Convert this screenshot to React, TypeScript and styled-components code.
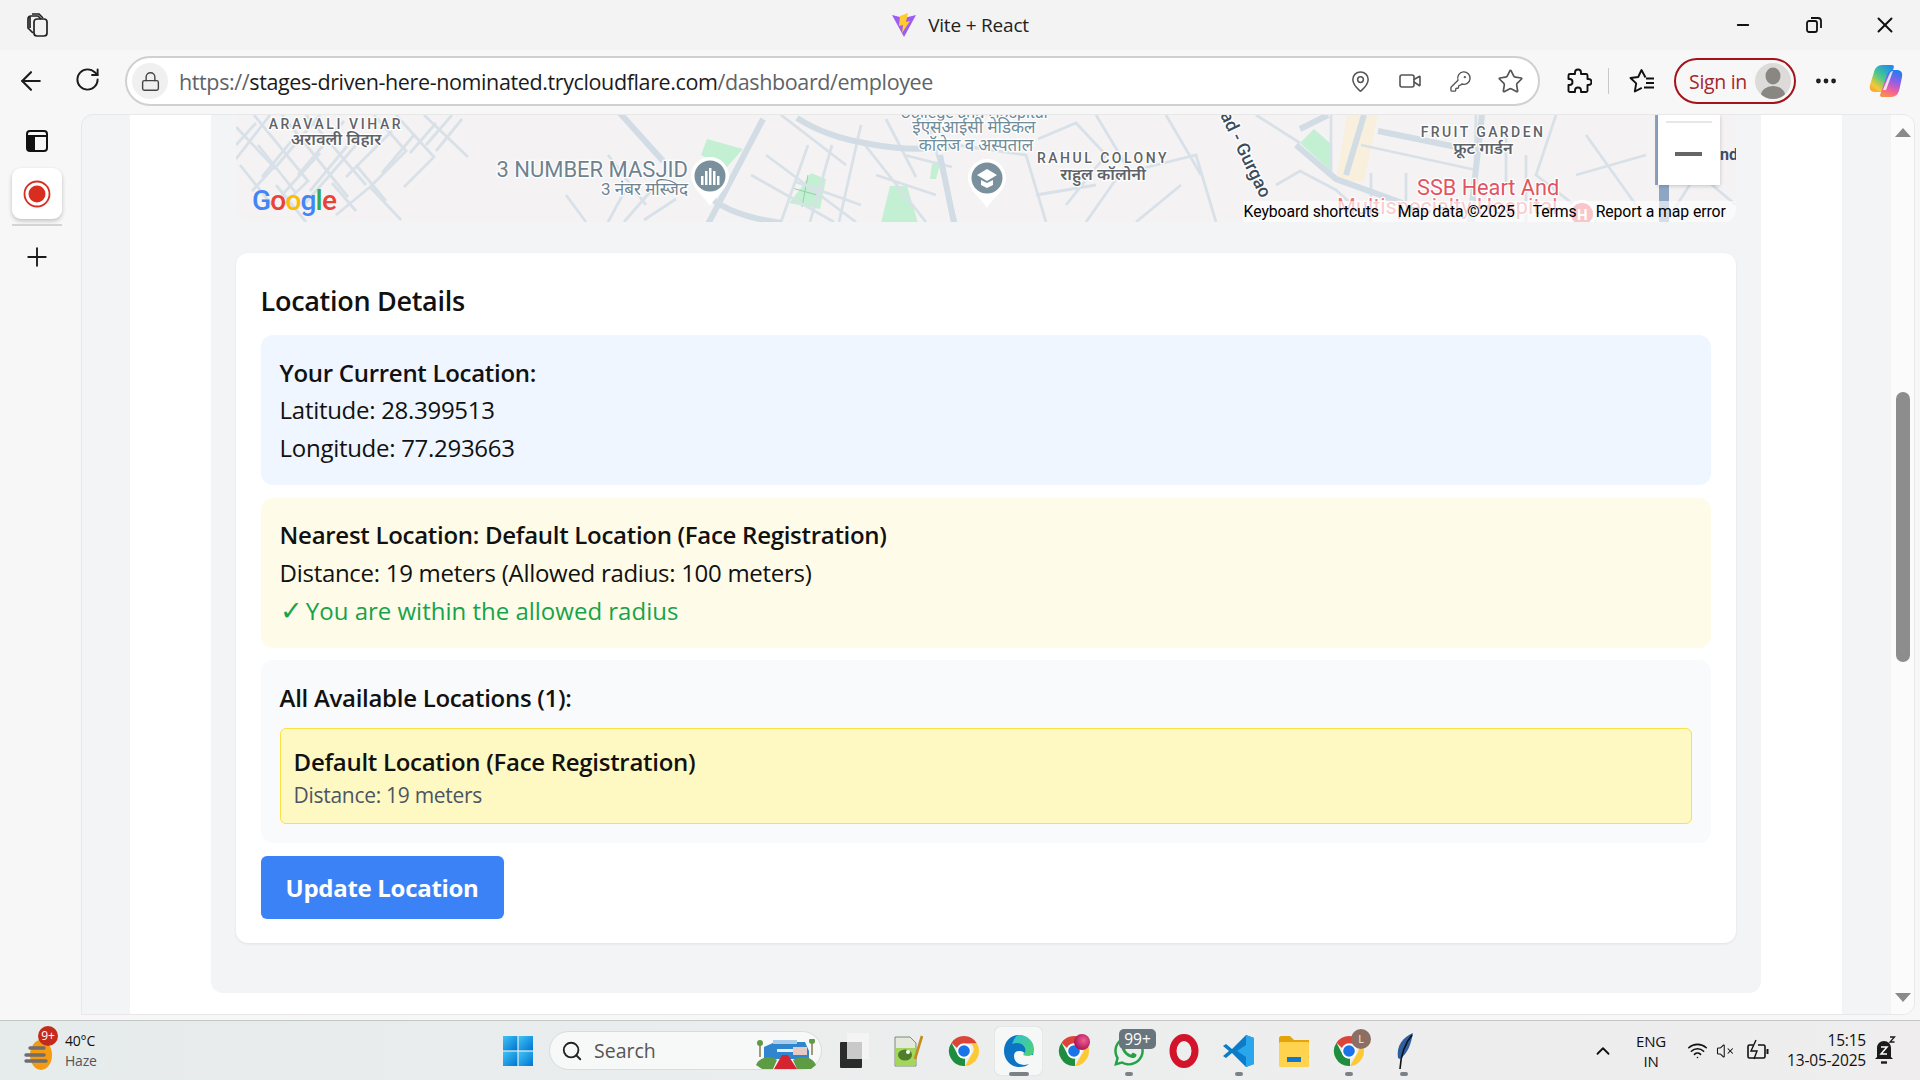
import React from 'react';
import styled, { createGlobalStyle } from 'styled-components';
import {
  ArrowLeft, RotateCw, Lock, MapPin, Video, KeyRound, Star, MoreHorizontal,
  Plus, Minus, X, Search, ChevronUp, Wifi, VolumeX,
} from 'lucide-react';
import { FaWhatsapp } from 'react-icons/fa';

const GlobalStyle = createGlobalStyle`
  html, body { margin: 0; padding: 0; height: 100%; overflow: hidden; }
  body { font-family: "Open Sans", "Noto Sans", "Liberation Sans", sans-serif; color: #111827; }
  * { box-sizing: border-box; }
`;

const Screen = styled.div`
  width: 1920px;
  height: 1080px;
  display: flex;
  flex-direction: column;
  background: #f7f7f7;
  overflow: hidden;
`;

/* ---------- title bar ---------- */
const TitleBar = styled.div`
  height: 50px;
  background: #f3f3f3;
  display: grid;
  grid-template-columns: 1fr auto 1fr;
  align-items: center;
`;
const TitleLeft = styled.div`
  padding: 4px 0 0 23px;
`;
const TabTitle = styled.div`
  display: flex;
  align-items: center;
  gap: 11px;
  font-size: 19px;
  letter-spacing: -0.2px;
  color: #222;
`;
const WindowButtons = styled.div`
  display: flex;
  justify-content: flex-end;
  align-items: center;
`;
const WindowButton = styled.div`
  width: 71px;
  height: 50px;
  display: flex;
  align-items: center;
  justify-content: center;
  color: #111;
`;

/* ---------- toolbar ---------- */
const Toolbar = styled.div`
  height: 64px;
  display: flex;
  align-items: center;
  padding: 0 0 2px 0;
`;
const NavButton = styled.div`
  width: 56px;
  display: flex;
  justify-content: center;
  color: #1c1c1c;
`;
const NavGroup = styled.div`
  display: flex;
  padding-left: 3px;
  margin-right: 10px;
`;
const AddressBar = styled.div`
  width: 1415px;
  height: 50px;
  border: 2px solid #d0d0d0;
  border-radius: 25px;
  background: #fff;
  display: flex;
  align-items: center;
  padding: 0 3px 0 5px;
`;
const LockBadge = styled.div`
  width: 36px;
  height: 36px;
  border-radius: 50%;
  background: #f0f0f0;
  display: flex;
  align-items: center;
  justify-content: center;
  color: #444;
  margin-right: 11px;
`;
const Url = styled.div`
  flex: 1;
  font-size: 21.5px;
  letter-spacing: -0.38px;
  color: #5f6368;
  white-space: nowrap;
`;
const UrlHost = styled.span`
  color: #1b1b1b;
`;
const AddressIcon = styled.div`
  width: 50px;
  display: flex;
  justify-content: center;
  color: #555;
`;
const ToolIcon = styled.div<{ $left?: number }>`
  display: flex;
  justify-content: center;
  color: #1b1b1b;
  width: 60px;
  margin-left: ${(p) => p.$left || 0}px;
`;
const ToolDivider = styled.div`
  width: 1px;
  height: 26px;
  background: #c9c9c9;
`;
const SignIn = styled.div`
  width: 122px;
  height: 46px;
  border: 2px solid #a4121a;
  border-radius: 23px;
  margin-left: 2px;
  display: flex;
  align-items: center;
  justify-content: space-between;
  padding: 0 3px 0 13px;
  font-size: 19.5px;
  letter-spacing: -0.3px;
  color: #a4262c;
`;
const Avatar = styled.div`
  width: 36px;
  height: 36px;
  border-radius: 50%;
  background: #dcdbd9;
  overflow: hidden;
`;
const CopilotSlot = styled.div`
  margin-left: 12px;
  display: flex;
`;

/* ---------- browser body ---------- */
const Body = styled.div`
  height: 901px;
  display: flex;
`;
const Sidebar = styled.div`
  width: 81px;
  display: flex;
  flex-direction: column;
  align-items: center;
  padding: 5px 8px 0 0;
`;
const SideIcon = styled.div<{ $after?: number }>`
  height: 44px;
  display: flex;
  align-items: center;
  justify-content: center;
  color: #1b1b1b;
  margin-bottom: ${(p) => p.$after || 0}px;
`;
const RecordTile = styled.div`
  width: 50px;
  height: 51px;
  border-radius: 9px;
  background: #fff;
  box-shadow: 0 2px 4px rgba(0, 0, 0, 0.22);
  display: flex;
  align-items: center;
  justify-content: center;
`;
const RecordUnderline = styled.div`
  width: 50px;
  height: 2px;
  background: #d4d4d4;
  margin: 5px 0 9px;
`;
const Page = styled.div`
  width: 1834px;
  border-radius: 12px 12px 12px 0;
  border: 1px solid #e8e8e8;
  background: #f3f4f6;
  display: flex;
  overflow: hidden;
`;
const PageGutter = styled.div`
  width: 48px;
`;
const WhiteColumn = styled.div`
  width: 1712px;
  background: #fff;
  padding: 0 81px;
`;
const Panel = styled.div`
  background: #f3f4f6;
  height: 878px;
  padding: 0 25px;
  border-radius: 0 0 12px 12px;
`;

/* ---------- map ---------- */
const MapBox = styled.div`
  position: relative;
  height: 107px;
  background: #f4f2f3;
  border-radius: 0 0 12px 12px;
  overflow: hidden;
  margin-bottom: 31px;
`;
const Attribution = styled.div`
  position: absolute;
  right: 0;
  bottom: 0;
  left: 1007px;
  height: 21px;
  background: rgba(255, 255, 255, 0.62);
  display: flex;
  align-items: center;
  padding-left: 1px;
  font-family: Roboto, sans-serif;
  font-size: 15.8px;
  letter-spacing: -0.1px;
  color: #000;
  white-space: nowrap;
`;
const AttributionItem = styled.span<{ $gap: number }>`
  margin-right: ${(p) => p.$gap}px;
`;
const ZoomControl = styled.div`
  position: absolute;
  top: 0;
  left: 1422px;
  width: 62px;
  height: 70px;
  background: #fff;
  box-shadow: 0 1px 4px rgba(0, 0, 0, 0.2);
`;
const ZoomSeparator = styled.div`
  height: 2px;
  margin: 6px 8px 0;
  background: #e6e6e6;
`;
const ZoomMinus = styled.div`
  width: 27px;
  height: 4px;
  margin: 29px auto 0;
  background: #666;
`;
const MapText = styled.text`
  font-family: Roboto, "Noto Sans", sans-serif;
  paint-order: stroke;
  stroke: #fff;
  stroke-width: 2.5px;
`;
const PlainMapText = styled.text`
  font-family: Roboto, sans-serif;
`;

/* ---------- location card ---------- */
const Card = styled.section`
  background: #fff;
  border-radius: 12px;
  box-shadow: 0 1px 3px rgba(0, 0, 0, 0.08);
  padding: 25px;
  height: 690px;
`;
const CardTitle = styled.h2`
  margin: 0 0 12px;
  font-size: 27px;
  line-height: 45px;
  font-weight: 600;
  letter-spacing: -0.3px;
  color: #111;
`;
const InfoBox = styled.div<{ $bg: string }>`
  background: ${(p) => p.$bg};
  border-radius: 12px;
  padding: 18.75px 19px;
  margin-bottom: 12.5px;
  font-size: 24px;
  line-height: 37.5px;
  letter-spacing: -0.29px;
  color: #111;
`;
const InfoHeading = styled.div`
  font-weight: 600;
`;
const GreenLine = styled.div`
  color: #16a34a;
  font-weight: 500;
  letter-spacing: 0;
  padding-top: 1px;
  margin-bottom: -1px;
`;
const CheckMark = styled.span`
  font-size: 27px;
  line-height: 0;
  margin-right: -3px;
`;
const LocationItem = styled.div`
  margin-top: 12px;
  height: 96px;
  background: #fef9c3;
  border: 1px solid #fde047;
  border-radius: 6px;
  padding: 14px 13px 0;
`;
const LocationName = styled.div`
  font-weight: 600;
  line-height: 37px;
`;
const LocationMeta = styled.div`
  font-size: 21px;
  line-height: 31px;
  color: #4b5563;
`;
const UpdateButton = styled.button`
  display: block;
  width: 243px;
  height: 63px;
  border: none;
  border-radius: 6px;
  background: #3b82f6;
  color: #fff;
  font-family: inherit;
  font-size: 24px;
  font-weight: 700;
  letter-spacing: -0.3px;
`;

/* ---------- scrollbar ---------- */
const ScrollTrack = styled.div`
  width: 24px;
  margin-left: 1px;
  background: #fbfbfb;
  border-left: 1px solid #f4f4f4;
  display: flex;
  flex-direction: column;
  align-items: center;
  padding: 13px 0 0 0;
`;
const ScrollArrow = styled.div<{ $down?: boolean }>`
  width: 0;
  height: 0;
  border-left: 8px solid transparent;
  border-right: 8px solid transparent;
  ${(p) => (p.$down ? 'border-top: 9px solid #8a8a8a;' : 'border-bottom: 9px solid #8a8a8a;')}
`;
const ScrollThumb = styled.div`
  width: 14px;
  height: 270px;
  border-radius: 7px;
  background: #8d8d8d;
  margin: 255px 0 331px;
`;

/* ---------- taskbar ---------- */
const Taskbar = styled.div`
  margin-top: 5px;
  height: 60px;
  border-top: 1px solid #c4c6c7;
  background: linear-gradient(90deg, #e6ebec 0%, #eceeee 50%, #efeded 100%);
  display: grid;
  grid-template-columns: 490px auto 1fr;
  align-items: center;
`;
const Weather = styled.div`
  display: flex;
  align-items: center;
  padding-left: 24px;
  gap: 7px;
`;
const WeatherIconWrap = styled.div`
  position: relative;
  width: 34px;
  height: 42px;
`;
const WeatherBadge = styled.div`
  position: absolute;
  top: -4px;
  left: 14px;
  min-width: 20px;
  height: 20px;
  border-radius: 10px;
  background: #c42b1c;
  color: #fff;
  font-size: 12px;
  line-height: 20px;
  text-align: center;
`;
const WeatherText = styled.div`
  font-size: 14px;
  line-height: 20px;
  letter-spacing: -0.2px;
  color: #111;
`;
const MutedLine = styled.div`
  color: #555;
`;
const TaskIcons = styled.div`
  display: flex;
  align-items: center;
`;
const TaskSlot = styled.div<{ $active?: boolean }>`
  position: relative;
  width: 55px;
  height: 48px;
  display: flex;
  align-items: center;
  justify-content: center;
  &::before {
    content: '';
    display: ${(p) => (p.$active ? 'block' : 'none')};
    position: absolute;
    inset: 0 4px;
    background: #f6f8f8;
    border-radius: 5px;
    box-shadow: 0 0 1px rgba(0, 0, 0, 0.25);
  }
  & > svg { position: relative; }
`;
const RunDot = styled.div<{ $wide?: boolean }>`
  position: absolute;
  bottom: -1px;
  left: 50%;
  transform: translateX(-50%);
  width: ${(p) => (p.$wide ? 20 : 8)}px;
  height: 4px;
  border-radius: 2px;
  background: #7b8287;
`;
const CountBadge = styled.div`
  position: absolute;
  top: 2px;
  right: 0;
  width: 37px;
  height: 20px;
  border-radius: 5px;
  background: #69757d;
  color: #fff;
  font-size: 15.5px;
  line-height: 20px;
  text-align: center;
`;
const ProfileBadge = styled.div`
  position: absolute;
  top: 2px;
  right: 5px;
  width: 20px;
  height: 20px;
  border-radius: 50%;
  background: #8d6e63;
  color: #eee;
  font-size: 11px;
  line-height: 20px;
  text-align: center;
`;
const PhotoBadge = styled.div`
  position: absolute;
  top: 7px;
  right: 11px;
  width: 16px;
  height: 16px;
  border-radius: 50%;
  background: radial-gradient(circle at 60% 40%, #f06292, #ad1457 70%, #5d2a3c);
`;
const SearchPill = styled.div`
  width: 273px;
  height: 39px;
  margin: 0 4px;
  border-radius: 20px;
  background: #f7f8f8;
  border: 1px solid #d9dcdd;
  display: flex;
  align-items: center;
  padding-left: 11px;
  gap: 11px;
  font-size: 19.5px;
  color: #555;
  position: relative;
`;
const SearchArt = styled.div`
  position: absolute;
  right: 4px;
  top: 7px;
`;
const Tray = styled.div`
  display: flex;
  align-items: center;
  justify-content: flex-end;
  padding-right: 16px;
  color: #111;
  font-size: 15px;
  letter-spacing: -0.2px;
`;
const TrayIcon = styled.div<{ $w: number }>`
  width: ${(p) => p.$w}px;
  display: flex;
  justify-content: center;
  align-items: center;
`;
const Lang = styled.div`
  width: 44px;
  margin: 0 5px 0 8px;
  text-align: center;
  line-height: 20px;
  font-size: 15px;
`;
const Clock = styled.div`
  width: 84px;
  text-align: right;
  line-height: 20px;
  font-size: 15.5px;
  margin-top: -2px;
`;

/* ---------- icons ---------- */
const WorkspacesIcon = () => (
  <svg width="28" height="28" viewBox="0 0 28 28" fill="none" stroke="#222" strokeWidth="1.7">
    <rect x="11" y="8" width="13" height="17" rx="3" />
    <path d="M10 22 5 17V8c0-2 1-3 3-3h7l3 3" />
    <path d="M7 17V6" />
    <path d="M9 3h7l4 4" />
  </svg>
);

const ViteIcon = () => (
  <svg width="26" height="26" viewBox="0 0 26 26">
    <path d="M1 3 13 25 25 3 13 6z" fill="#9d5cf6" />
    <path d="M9 4l8-3-2 9 4-1-8 12 1-8-4 1z" fill="#ffcb2e" />
  </svg>
);

const PuzzleIcon = () => (
  <svg width="28" height="28" viewBox="0 0 28 28" fill="none" stroke="#111" strokeWidth="1.9" strokeLinejoin="round">
    <path d="M11 7V5.5a3 3 0 0 1 6 0V7h5a1.5 1.5 0 0 1 1.5 1.5V12h1a3 3 0 0 1 0 6h-1v5.5A1.5 1.5 0 0 1 22 25h-5v-1.5a3 3 0 0 0-6 0V25H6a1.5 1.5 0 0 1-1.5-1.5V18h1a3 3 0 0 0 0-6h-1V8.5A1.5 1.5 0 0 1 6 7z" />
  </svg>
);

const FavoritesIcon = () => (
  <svg width="28" height="28" viewBox="0 0 28 28" fill="none" stroke="#111" strokeWidth="1.9" strokeLinejoin="round">
    <path d="M17.5 10.5 13.5 3l-3.3 7-7.7 1 5.7 5.4L6.8 24.5l7-3.6" />
    <path d="M18 11.5h8M18 16h8M16 20.5h10" />
  </svg>
);

const CopilotIcon = () => (
  <svg width="36" height="36" viewBox="0 0 36 36">
    <defs>
      <linearGradient id="copA" x1="0.8" y1="0" x2="0.1" y2="1">
        <stop offset="0" stopColor="#1c8ef0" />
        <stop offset="0.45" stopColor="#49c98c" />
        <stop offset="0.8" stopColor="#f7c933" />
        <stop offset="1" stopColor="#f79a3a" />
      </linearGradient>
      <linearGradient id="copB" x1="0.7" y1="0" x2="0.4" y2="1">
        <stop offset="0" stopColor="#1f7df0" />
        <stop offset="0.4" stopColor="#8f5fe8" />
        <stop offset="0.75" stopColor="#f0609f" />
        <stop offset="1" stopColor="#fb8b4e" />
      </linearGradient>
    </defs>
    <path d="M14 2h10c1.5 0 2.3 1 1.8 2.5L19 24c-1 3-3 5-6 5H7c-4 0-6-3-5-7l4-13c1-4 4-7 8-7z" fill="url(#copA)" />
    <path d="M23 34h-9c-1.5 0-2.3-1-1.8-2.5L19 12c1-3 3-5 6-5h4c4 0 6 3 5 7l-2.5 12c-1 5-4 8-8.5 8z" fill="url(#copB)" />
    <path d="M25 8 18 27h-3l6-15c1-2 2-4 4-4z" fill="#fff" opacity="0.8" />
  </svg>
);

const AvatarFigure = () => (
  <svg width="36" height="36" viewBox="0 0 36 36">
    <ellipse cx="18" cy="13" rx="7.5" ry="8.5" fill="#8a8783" />
    <ellipse cx="18" cy="32" rx="12" ry="9" fill="#8a8783" />
  </svg>
);

const PanelIcon = () => (
  <svg width="24" height="24" viewBox="0 0 24 24" fill="none" stroke="#111" strokeWidth="2">
    <rect x="2" y="2" width="20" height="20" rx="3" />
    <path d="M2 7h20" />
    <rect x="3" y="7" width="7" height="14" fill="#111" stroke="none" />
  </svg>
);

const RecordIcon = () => (
  <svg width="28" height="28" viewBox="0 0 28 28">
    <circle cx="14" cy="14" r="12.5" fill="none" stroke="#d92d20" strokeWidth="1.8" />
    <circle cx="14" cy="14" r="8.5" fill="#d92d20" />
  </svg>
);

const ChromeIcon = ({ size = 32 }: { size?: number }) => (
  <svg width={size} height={size} viewBox="0 0 32 32">
    <path d="M16 1a15 15 0 0 1 13 7.5H16a7.5 7.5 0 0 0-7 4.5L3.5 7.7A15 15 0 0 1 16 1z" fill="#db4437" />
    <path d="M29 8.5A15 15 0 0 1 17 31l6.5-11.3a7.5 7.5 0 0 0-.6-11.2z" fill="#fcc934" />
    <path d="M3.5 7.7 9.6 19.5a7.5 7.5 0 0 0 7.4 3.9L17 31A15 15 0 0 1 3.5 7.7z" fill="#1e8e3e" />
    <circle cx="16" cy="16" r="7.4" fill="#fff" />
    <circle cx="16" cy="16" r="5.8" fill="#1a73e8" />
  </svg>
);

const EdgeIcon = () => (
  <svg width="32" height="34" viewBox="0 0 32 34">
    <defs>
      <linearGradient id="edgeG" x1="0" y1="0" x2="1" y2="1">
        <stop offset="0" stopColor="#2fc2d8" />
        <stop offset="1" stopColor="#52d36a" />
      </linearGradient>
    </defs>
    <path d="M16 1C7 1 1 8 1 17c0 9 7 16 15 16 5 0 8-1 10-3-9 3-15-2-15-8 0-3 2-5 5-5 4 0 6 2 6 4h8c2-8-3-20-14-20z" fill="#0c74c4" />
    <path d="M16 1c9 0 15 7 15 14 0 4-2 7-6 7-3 0-5-1-5-2 2-1 3-3 2-6-2-5-8-6-13-4C11 5 13 1 16 1z" fill="url(#edgeG)" />
  </svg>
);

const TaskViewIcon = () => (
  <svg width="30" height="36" viewBox="0 0 30 36">
    <rect x="8" y="0" width="22" height="26" rx="1" fill="#f4f4f4" />
    <rect x="1" y="9" width="22" height="26" rx="1" fill="#2b2b2b" />
    <rect x="8" y="9" width="15" height="17" fill="#c9c9c9" />
  </svg>
);

const NotepadIcon = () => (
  <svg width="30" height="34" viewBox="0 0 30 34">
    <path d="M1 3h15l6 6v23H1z" fill="#e4e9dd" stroke="#7f8a78" />
    <path d="M2 14h19v17H2z" fill="#a5d65c" />
    <ellipse cx="11" cy="21" rx="7" ry="5.5" fill="#4e7d2b" />
    <circle cx="14" cy="18" r="2" fill="#fff" />
    <path d="M21 25 28 2" stroke="#c58b1d" strokeWidth="2.6" />
  </svg>
);

const OperaIcon = () => (
  <svg width="30" height="34" viewBox="0 0 30 34">
    <ellipse cx="15" cy="17" rx="11" ry="13.5" fill="none" stroke="#d2132a" strokeWidth="7" />
  </svg>
);

const VsCodeIcon = () => (
  <svg width="32" height="34" viewBox="0 0 32 34">
    <path d="M23 1 9 15 3 10 0 12l6 5-6 5 3 2 6-5 14 14 8-3V4z" fill="#0a7cc9" />
    <path d="M23 1l8 3v26l-8 3V23l-9-6 9-6z" fill="#2aa6ec" />
  </svg>
);

const FolderIcon = () => (
  <svg width="32" height="34" viewBox="0 0 32 34">
    <path d="M1 4c0-1 1-2 2-2h9l4 4h15v4H1z" fill="#e5a50a" />
    <rect x="1" y="8" width="30" height="25" rx="1.5" fill="#ffd34e" />
    <rect x="9" y="23" width="14" height="5" fill="#0f78d4" />
  </svg>
);

const FeatherIcon = () => (
  <svg width="22" height="38" viewBox="0 0 22 38">
    <path d="M20 1C10 5 3 14 5 26l2 1c8-6 11-15 13-26z" fill="#2f5d9e" />
    <path d="M19 3C13 10 8 20 7 37" stroke="#111" strokeWidth="1.6" fill="none" />
  </svg>
);

const WindowsLogo = () => (
  <svg width="30" height="30" viewBox="0 0 30 30">
    <defs>
      <linearGradient id="winG" x1="0" y1="0" x2="1" y2="1">
        <stop offset="0" stopColor="#40c4f4" />
        <stop offset="1" stopColor="#0074d1" />
      </linearGradient>
    </defs>
    <rect x="0" y="0" width="14.4" height="14.4" fill="url(#winG)" />
    <rect x="15.6" y="0" width="14.4" height="14.4" fill="url(#winG)" />
    <rect x="0" y="15.6" width="14.4" height="14.4" fill="url(#winG)" />
    <rect x="15.6" y="15.6" width="14.4" height="14.4" fill="url(#winG)" />
  </svg>
);

const WeatherIcon = () => (
  <svg width="34" height="42" viewBox="0 0 34 42">
    <ellipse cx="17" cy="25" rx="11" ry="15" fill="#f49b12" />
    <path d="M6 18h14M2 25h18M2 31h20" stroke="#6e6e6e" strokeWidth="3.4" strokeLinecap="round" />
  </svg>
);

const SearchArtwork = () => (
  <svg width="62" height="30" viewBox="0 0 62 30">
    <path d="M5 4v14M57 2v14" stroke="#6b5a2a" strokeWidth="1.2" />
    <circle cx="5" cy="4" r="3" fill="#5d9b45" />
    <circle cx="57" cy="2" r="3" fill="#5d9b45" />
    <path d="M9 8 20 3h30l4 9v8H9z" fill="#2f86cf" />
    <rect x="18" y="1" width="24" height="4" fill="#a9cdea" />
    <rect x="38" y="8" width="14" height="8" fill="#e8c9c4" />
    <rect x="22" y="10" width="16" height="3" fill="#e6eef5" />
    <path d="M1 26c3-8 14-10 21-5l-4 9H7zM61 26c-3-8-14-10-23-5l4 9h14z" fill="#5d9b45" />
    <path d="M27 16h6l9 14H19z" fill="#d5242f" />
  </svg>
);

const BatteryIcon = () => (
  <svg width="26" height="24" viewBox="0 0 26 24" fill="none" stroke="#111" strokeWidth="1.6">
    <path d="M8 6H4.5A1.5 1.5 0 0 0 3 7.5v10A1.5 1.5 0 0 0 4.5 19h14a1.5 1.500 0 0 0 1.5-1.5v-10A1.5 1.5 0 0 0 18.5 6H13" />
    <path d="M22.5 10v5" strokeWidth="2" />
    <path d="M11 1 6 12h6l-3 8" strokeWidth="1.4" />
  </svg>
);

const BellIcon = () => (
  <svg width="22" height="30" viewBox="0 0 22 30">
    <path d="M3 21V12c0-4 3-7 7-7s7 3 7 7v9l2 2H1z" fill="#1b1b1b" />
    <path d="M7 26.5h6" stroke="#1b1b1b" strokeWidth="2.4" />
    <path d="M7 11h6l-6 7h6" stroke="#fff" strokeWidth="1.5" fill="none" />
    <path d="M16 1h4.5L16 6h4.5" stroke="#1b1b1b" strokeWidth="1.3" fill="none" />
  </svg>
);

/* ---------- map drawing ---------- */
const minorRoads = [
  'M0 12 38 52 16 76M0 44 34 0M18 0 72 66 45 92M46 0 112 82M70 0 130 70',
  'M4 50 36 90M22 30 60 78M84 0 38 54M108 6 62 60M112 30 74 76M96 68 120 96M0 30 20 8M40 70 70 107',
  'M26 62 62 18M46 80 84 38M66 92 120 30M138 0 170 36 134 72M156 16 110 62M160 0 198 42 168 72M178 20 146 58',
  'M188 0 232 42M216 0 190 30M120 50 150 86M134 72 165 105M100 100 134 72M200 8 174 38M226 4 200 36',
  'M372 40 410 90M392 70 372 107M420 70 388 107M408 105 440 84M330 80 350 107',
  'M545 0 610 50M530 40 620 107M515 60 598 107M572 30 545 107M596 30 574 107M625 10 603 107M560 67 625 90',
  'M625 25 690 107M650 4 680 62M668 40 716 52M690 0 720 107M720 30 790 40 810 107M640 60 700 80',
  'M802 24 840 8 870 40 830 90M860 0 890 50 850 107M880 60 960 40 980 107M930 0 965 60M900 107 945 70M800 80 860 70',
  'M1040 70 1064 56 1100 75 1135 107M1020 0 1064 28M1095 0 1095 60M1125 30 1240 55M1135 58 1135 107M1170 58 1170 92',
  'M1240 0 1238 107M1270 20 1270 70M1290 40 1290 107M1320 0 1300 60 1360 107M1340 60 1410 40M1350 20 1400 90',
  'M1440 40 1500 90M1460 60 1430 107',
];
const majorRoads = [
  'M382 -4 427 46',
  'M527 4 471 111',
  'M471 79Q490 100 545 108',
  'M561 3Q590 22 634 29Q680 38 720 30',
  'M704 40 718 108',
  'M1064 14 1092 0M1060 30 1100 64 1172 90',
  'M1128 0 1110 60M1142 16 1240 36',
  'M1246 0 1234 107',
];

const MapDrawing = () => (
  <svg width="1500" height="107" viewBox="0 0 1500 107">
    <path d="M471 24 507 34 490 53 465 40z" fill="#c3efd2" />
    <path d="M565 73 575 58 590 64 584 94 553 88z" fill="#c3efd2" />
    <path d="M572 60 566 92M556 73 588 82" stroke="#8fd3a7" strokeWidth="1" />
    <path d="M654 71 671 71 682 108 645 108z" fill="#c3efd2" />
    <path d="M696 49 704 49 700 64 694 64z" fill="#c3efd2" />
    <path d="M1064 28 1078 14 1095 29 1095 56z" fill="#c3efd2" />
    <path d="M1111 0 1142 0 1128 66 1100 66z" fill="#f8f0dc" />
    {minorRoads.map((d) => (
      <path key={d} d={d} fill="none" stroke="#d9e1e8" strokeWidth="2.8" />
    ))}
    {majorRoads.map((d) => (
      <path key={d} d={d} fill="none" stroke="#d2dce4" strokeWidth="6" />
    ))}
    <path d="M1422 0 1422 70" stroke="#8ea6c4" strokeWidth="6" />
    <path d="M1428 70 1428 107" stroke="#8ea6c4" strokeWidth="10" />

    <MapText x="100" y="14" textAnchor="middle" fontSize="14" letterSpacing="2.6" fill="#5f6368" fontWeight="500">ARAVALI VIHAR</MapText>
    <MapText x="100" y="30" textAnchor="middle" fontSize="16.5" fill="#5f6368" fontWeight="600">अरावली  विहार</MapText>
    <MapText x="452" y="62" textAnchor="end" fontSize="22" fill="#6f838f">3 NUMBER MASJID</MapText>
    <MapText x="452" y="80" textAnchor="end" fontSize="17" fill="#6f838f">3 नंबर मस्जिद</MapText>
    <path d="M474 42c-10 0-19 8-19 19 0 12 13 20 19 30 6-10 19-18 19-30 0-11-9-19-19-19z" fill="#fff" />
    <circle cx="474" cy="61" r="15.5" fill="#7a909c" />
    <path d="M465 70v-9h2.5v9zM469 70V56h2.5v14zM473 70V53h2.5v17zM477 70V56h2.5v14zM481 70V61h2.5v9z" fill="#fff" />

    <MapText x="738" y="3" textAnchor="middle" fontSize="16" fill="#6f8c99">College and Hospital</MapText>
    <MapText x="738" y="18" textAnchor="middle" fontSize="17" fill="#6f8c99">ईएसआईसी मेडिकल</MapText>
    <MapText x="740" y="36" textAnchor="middle" fontSize="17" fill="#6f8c99">कॉलेज व अस्पताल</MapText>
    <path d="M751 44c-10 0-19 8-19 19 0 12 13 20 19 30 6-10 19-18 19-30 0-11-9-19-19-19z" fill="#fff" />
    <circle cx="751" cy="63" r="15.5" fill="#7a909c" />
    <path d="M741 60l10-6 10 6-10 6zM745 65v5l6 3 6-3v-5l-6 3z" fill="#fff" />

    <MapText x="867" y="48" textAnchor="middle" fontSize="14" letterSpacing="2.5" fill="#5f6368" fontWeight="500">RAHUL COLONY</MapText>
    <MapText x="867" y="65" textAnchor="middle" fontSize="16.5" fill="#5f6368" fontWeight="600">राहुल कॉलोनी</MapText>
    <MapText x="0" y="0" transform="translate(984 0) rotate(64)" fontSize="18" fontWeight="500" fill="#3c4c5c">ad - Gurgao</MapText>
    <MapText x="1247" y="22" textAnchor="middle" fontSize="14" letterSpacing="2.4" fill="#5f6368" fontWeight="500">FRUIT GARDEN</MapText>
    <MapText x="1247" y="39" textAnchor="middle" fontSize="16.5" fill="#5f6368" fontWeight="600">फ्रूट गार्डन</MapText>
    <MapText x="1181" y="80" fontSize="21.7" fill="#e05561">SSB Heart And</MapText>
    <MapText x="1101" y="99" fontSize="21.7" fill="#ea7b85">Multispecialty Hospital</MapText>
    <circle cx="1346" cy="99" r="14" fill="#fff" />
    <circle cx="1346" cy="99" r="11" fill="#ef6a74" />
    <PlainMapText x="1341" y="105" fontSize="15" fill="#fff" fontWeight="700">H</PlainMapText>
    <PlainMapText x="1484" y="45" fontSize="16" fontWeight="700" fill="#3c4c6c">nd</PlainMapText>
    <PlainMapText x="16" y="95" fontSize="28" fontWeight="500" letterSpacing="-0.8">
      <tspan fill="#4285f4">G</tspan>
      <tspan fill="#ea4335">o</tspan>
      <tspan fill="#fbbc05">o</tspan>
      <tspan fill="#4285f4">g</tspan>
      <tspan fill="#34a853">l</tspan>
      <tspan fill="#ea4335">e</tspan>
    </PlainMapText>
  </svg>
);

export default function App() {
  return (
    <Screen>
      <GlobalStyle />
      <TitleBar>
        <TitleLeft><WorkspacesIcon /></TitleLeft>
        <TabTitle><ViteIcon /><span>Vite + React</span></TabTitle>
        <WindowButtons>
          <WindowButton><Minus size={18} strokeWidth={2.4} /></WindowButton>
          <WindowButton>
            <svg width="18" height="18" viewBox="0 0 18 18" fill="none" stroke="#111" strokeWidth="1.8">
              <rect x="2" y="5" width="10" height="11" rx="2" />
              <path d="M6 2h7c2 0 3 1 3 3v7" />
            </svg>
          </WindowButton>
          <WindowButton><X size={26} strokeWidth={1.8} /></WindowButton>
        </WindowButtons>
      </TitleBar>

      <Toolbar>
        <NavGroup>
          <NavButton><ArrowLeft size={30} strokeWidth={1.7} /></NavButton>
          <NavButton><RotateCw size={27} strokeWidth={1.7} /></NavButton>
        </NavGroup>
        <AddressBar>
          <LockBadge><Lock size={21} strokeWidth={1.6} /></LockBadge>
          <Url>
            https://<UrlHost>stages-driven-here-nominated.trycloudflare.com</UrlHost>/dashboard/employee
          </Url>
          <AddressIcon><MapPin size={23} strokeWidth={1.6} /></AddressIcon>
          <AddressIcon><Video size={24} strokeWidth={1.6} /></AddressIcon>
          <AddressIcon><KeyRound size={23} strokeWidth={1.4} /></AddressIcon>
          <AddressIcon><Star size={27} strokeWidth={1.5} /></AddressIcon>
        </AddressBar>
        <ToolIcon $left={8}><PuzzleIcon /></ToolIcon>
        <ToolDivider />
        <ToolIcon $left={3}><FavoritesIcon /></ToolIcon>
        <SignIn>Sign in<Avatar><AvatarFigure /></Avatar></SignIn>
        <ToolIcon><MoreHorizontal size={26} strokeWidth={2.4} /></ToolIcon>
        <CopilotSlot><CopilotIcon /></CopilotSlot>
      </Toolbar>

      <Body>
        <Sidebar>
          <SideIcon $after={5}><PanelIcon /></SideIcon>
          <RecordTile><RecordIcon /></RecordTile>
          <RecordUnderline />
          <SideIcon><Plus size={30} strokeWidth={1.5} /></SideIcon>
        </Sidebar>
        <Page>
          <PageGutter />
          <WhiteColumn>
            <Panel>
              <MapBox>
                <MapDrawing />
                <ZoomControl>
                  <ZoomSeparator />
                  <ZoomMinus />
                </ZoomControl>
                <Attribution>
                  <AttributionItem $gap={19}>Keyboard shortcuts</AttributionItem>
                  <AttributionItem $gap={18}>Map data ©2025</AttributionItem>
                  <AttributionItem $gap={19}>Terms</AttributionItem>
                  <AttributionItem $gap={0}>Report a map error</AttributionItem>
                </Attribution>
              </MapBox>
              <Card>
                <CardTitle>Location Details</CardTitle>
                <InfoBox $bg="#eff6ff">
                  <InfoHeading>Your Current Location:</InfoHeading>
                  <div>Latitude: 28.399513</div>
                  <div>Longitude: 77.293663</div>
                </InfoBox>
                <InfoBox $bg="#fefce8">
                  <InfoHeading>Nearest Location: Default Location (Face Registration)</InfoHeading>
                  <div>Distance: 19 meters (Allowed radius: 100 meters)</div>
                  <GreenLine><CheckMark>✓</CheckMark> You are within the allowed radius</GreenLine>
                </InfoBox>
                <InfoBox $bg="#f9fafb">
                  <InfoHeading>All Available Locations (1):</InfoHeading>
                  <LocationItem>
                    <LocationName>Default Location (Face Registration)</LocationName>
                    <LocationMeta>Distance: 19 meters</LocationMeta>
                  </LocationItem>
                </InfoBox>
                <UpdateButton>Update Location</UpdateButton>
              </Card>
            </Panel>
          </WhiteColumn>
          <PageGutter />
          <ScrollTrack>
            <ScrollArrow />
            <ScrollThumb />
            <ScrollArrow $down />
          </ScrollTrack>
        </Page>
      </Body>

      <Taskbar>
        <Weather>
          <WeatherIconWrap>
            <WeatherIcon />
            <WeatherBadge>9+</WeatherBadge>
          </WeatherIconWrap>
          <WeatherText>
            <div>40°C</div>
            <MutedLine>Haze</MutedLine>
          </WeatherText>
        </Weather>
        <TaskIcons>
          <TaskSlot><WindowsLogo /></TaskSlot>
          <SearchPill>
            <Search size={22} strokeWidth={2} color="#222" />
            Search
            <SearchArt><SearchArtwork /></SearchArt>
          </SearchPill>
          <TaskSlot><TaskViewIcon /></TaskSlot>
          <TaskSlot><NotepadIcon /></TaskSlot>
          <TaskSlot><ChromeIcon /></TaskSlot>
          <TaskSlot $active><EdgeIcon /><RunDot $wide /></TaskSlot>
          <TaskSlot><ChromeIcon /><PhotoBadge /></TaskSlot>
          <TaskSlot>
            <FaWhatsapp size={34} color="#25a244" />
            <CountBadge>99+</CountBadge>
            <RunDot />
          </TaskSlot>
          <TaskSlot><OperaIcon /></TaskSlot>
          <TaskSlot><VsCodeIcon /><RunDot /></TaskSlot>
          <TaskSlot><FolderIcon /></TaskSlot>
          <TaskSlot><ChromeIcon /><ProfileBadge>L</ProfileBadge><RunDot /></TaskSlot>
          <TaskSlot><FeatherIcon /><RunDot /></TaskSlot>
        </TaskIcons>
        <Tray>
          <TrayIcon $w={36}><ChevronUp size={22} strokeWidth={2} /></TrayIcon>
          <Lang>ENG<br />IN</Lang>
          <TrayIcon $w={38}><Wifi size={21} strokeWidth={1.8} /></TrayIcon>
          <TrayIcon $w={18}><VolumeX size={20} strokeWidth={1.4} /></TrayIcon>
          <TrayIcon $w={48}><BatteryIcon /></TrayIcon>
          <Clock>15:15<br />13-05-2025</Clock>
          <TrayIcon $w={38}><BellIcon /></TrayIcon>
        </Tray>
      </Taskbar>
    </Screen>
  );
}
